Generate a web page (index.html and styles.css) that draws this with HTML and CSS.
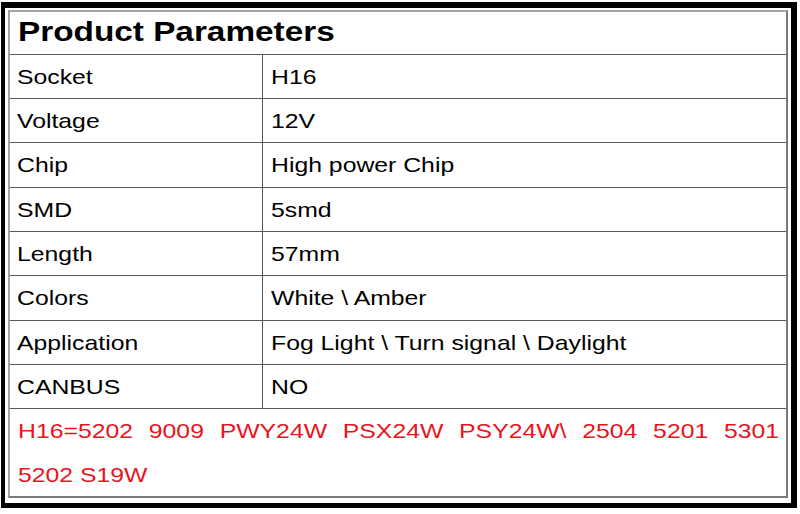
FILE: index.html
```html
<!DOCTYPE html>
<html>
<head>
<meta charset="utf-8">
<link rel="stylesheet" href="styles.css">
</head>
<body>
<div class="frame">
  <div class="table">
    <div class="head"><span class="st st-title">Product Parameters</span></div>
    <div class="row"><div class="key"><span class="st">Socket</span></div><div class="val"><span class="st">H16</span></div></div>
    <div class="row"><div class="key"><span class="st">Voltage</span></div><div class="val"><span class="st">12V</span></div></div>
    <div class="row tall"><div class="key"><span class="st">Chip</span></div><div class="val"><span class="st">High power Chip</span></div></div>
    <div class="row"><div class="key"><span class="st">SMD</span></div><div class="val"><span class="st">5smd</span></div></div>
    <div class="row"><div class="key"><span class="st">Length</span></div><div class="val"><span class="st">57mm</span></div></div>
    <div class="row tall"><div class="key"><span class="st">Colors</span></div><div class="val"><span class="st">White \ Amber</span></div></div>
    <div class="row"><div class="key"><span class="st">Application</span></div><div class="val"><span class="st">Fog Light \ Turn signal \ Daylight</span></div></div>
    <div class="row"><div class="key"><span class="st">CANBUS</span></div><div class="val"><span class="st">NO</span></div></div>
    <div class="note">
      <div class="note-line just">H16=5202 9009 PWY24W PSX24W PSY24W\ 2504 5201 5301</div>
      <div class="note-line">5202 S19W</div>
    </div>
  </div>
</div>
</body>
</html>
```

FILE: styles.css
```css
html, body {
  margin: 0;
  padding: 0;
  background: #fff;
}
body {
  font-family: "Liberation Sans", Arial, sans-serif;
  color: #000;
  width: 800px;
  height: 514px;
  overflow: hidden;
}
.frame {
  margin: 2px 0 0 1px;
  width: 780px;
  border-style: solid;
  border-color: #000;
  border-width: 6px 6px 5px 4px;
  padding: 2px 3px 5px 3px;
}
.table {
  box-sizing: border-box;
  width: 780px;
  border: 2px solid;
  border-color: #a4a4a4 #7a7a7a #7a7a7a #a4a4a4;
  overflow: hidden;
}
.st {
  display: inline-block;
  white-space: nowrap;
  font-size: 21px;
  transform: scaleX(1.18);
  transform-origin: 0 50%;
}
.st-title {
  font-size: 28px;
  font-weight: bold;
  transform: scaleX(1.19);
}
.head {
  height: 42px;
  display: flex;
  align-items: center;
  padding: 0 0 2px 8px;
  box-sizing: border-box;
}
.row {
  box-sizing: border-box;
  height: 44px;
  border-top: 1px solid #585858;
  display: flex;
}
.row.tall {
  height: 45px;
}
.key {
  box-sizing: border-box;
  width: 253px;
  border-right: 1px solid #585858;
  display: flex;
  align-items: center;
  padding-left: 7px;
}
.val {
  flex: 1;
  display: flex;
  align-items: center;
  padding-left: 8px;
}
.note {
  box-sizing: border-box;
  height: 88px;
  border-top: 1px solid #585858;
  padding-left: 8px;
  color: #e8141c;
  font-size: 21px;
}
.note-line {
  width: 645px;
  height: 44px;
  line-height: 44px;
  white-space: nowrap;
  transform: scaleX(1.18);
  transform-origin: 0 50%;
}
.note-line.just {
  white-space: normal;
  text-align: justify;
  text-align-last: justify;
}
```
